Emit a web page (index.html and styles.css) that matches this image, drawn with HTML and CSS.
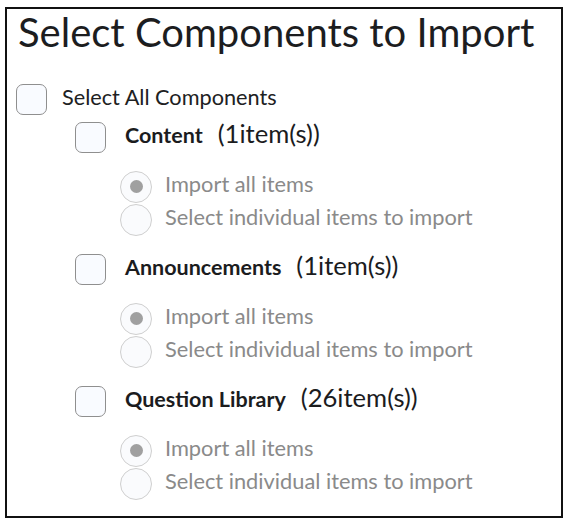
FILE: index.html
```html
<!DOCTYPE html>
<html>
<head>
<meta charset="utf-8">
<link rel="stylesheet" href="styles.css">
</head>
<body>
<div class="panel">
  <h1 class="title">Select Components to Import</h1>
  <div class="row select-all">
    <span class="checkbox"></span>
    <span class="label">Select All Components</span>
  </div>

  <div class="section">
    <div class="row comp">
      <span class="checkbox"></span>
      <span class="comp-text"><span class="comp-name">Content</span><span class="count">(1item(s))</span></span>
    </div>
    <div class="radios">
      <div class="radio-row"><span class="radio checked"></span><span class="radio-label">Import all items</span></div>
      <div class="radio-row"><span class="radio"></span><span class="radio-label">Select individual items to import</span></div>
    </div>
  </div>

  <div class="section">
    <div class="row comp">
      <span class="checkbox"></span>
      <span class="comp-text"><span class="comp-name">Announcements</span><span class="count">(1item(s))</span></span>
    </div>
    <div class="radios">
      <div class="radio-row"><span class="radio checked"></span><span class="radio-label">Import all items</span></div>
      <div class="radio-row"><span class="radio"></span><span class="radio-label">Select individual items to import</span></div>
    </div>
  </div>

  <div class="section">
    <div class="row comp">
      <span class="checkbox"></span>
      <span class="comp-text"><span class="comp-name">Question Library</span><span class="count">(26item(s))</span></span>
    </div>
    <div class="radios">
      <div class="radio-row"><span class="radio checked"></span><span class="radio-label">Import all items</span></div>
      <div class="radio-row"><span class="radio"></span><span class="radio-label">Select individual items to import</span></div>
    </div>
  </div>
</div>
</body>
</html>
```
FILE: styles.css
```css
html, body {
  margin: 0;
  padding: 0;
  background: #ffffff;
}
body {
  font-family: Lato, "Open Sans", sans-serif;
  color: #202122;
}
.panel {
  box-sizing: border-box;
  margin: 7px 0 0 5px;
  width: 558px;
  height: 511px;
  border: 2px solid #111;
}
.title {
  margin: 0;
  padding-left: 11px;
  height: 46px;
  line-height: 46px;
  font-size: 40px;
  font-weight: 400;
  color: #1c1d1f;
  white-space: nowrap;
}
.row {
  display: flex;
  align-items: center;
  height: 32px;
}
.select-all {
  margin-top: 28px;
  padding-left: 9px;
}
.checkbox {
  box-sizing: border-box;
  width: 31px;
  height: 31px;
  border: 1px solid #8f8f8f;
  border-radius: 7px;
  background: #f9fbff;
  flex: none;
}
.label {
  margin-left: 15px;
  margin-bottom: 4px;
  font-size: 21.7px;
  color: #202122;
  white-space: nowrap;
}
.section {
  padding-left: 68px;
}
.select-all + .section {
  margin-top: 6px;
}
.comp-text {
  display: flex;
  align-items: baseline;
  margin-left: 19px;
  margin-bottom: 9px;
  white-space: nowrap;
}
.comp-name {
  font-size: 21.5px;
  font-weight: 700;
  color: #1b1c1e;
}
.count {
  margin-left: 15px;
  font-size: 25.6px;
  color: #1b1c1e;
}
.radios {
  margin-top: 17px;
  margin-bottom: 17px;
  padding-left: 45px;
}
.radio-row {
  display: flex;
  align-items: center;
  height: 33px;
}
.radio {
  box-sizing: border-box;
  width: 32px;
  height: 32px;
  border: 1px solid #cfcfcf;
  border-radius: 50%;
  background: #fafbfd;
  position: relative;
  flex: none;
}
.radio.checked::after {
  content: "";
  position: absolute;
  left: 8.5px;
  top: 8.5px;
  width: 13px;
  height: 13px;
  border-radius: 50%;
  background: #a0a0a0;
}
.radio-label {
  margin-left: 13px;
  margin-bottom: 6px;
  font-size: 21.8px;
  color: #8a8a8a;
  white-space: nowrap;
}
```
